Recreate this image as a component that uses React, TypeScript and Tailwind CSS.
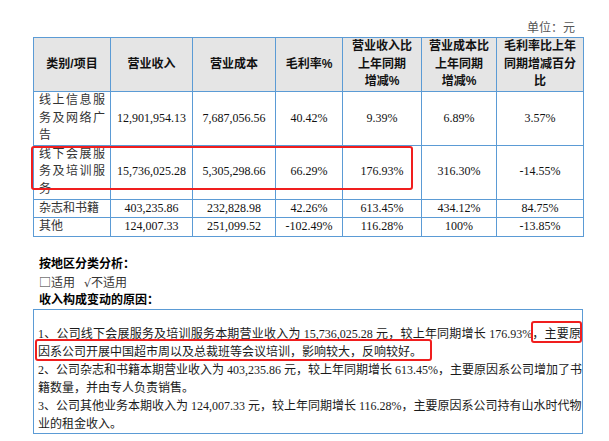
import React from "react";

const serif = "font-['Liberation_Serif','Noto_Sans_CJK_SC',serif]";
const sans = "font-['Liberation_Sans','Noto_Sans_CJK_SC',sans-serif]";

type Row = { name: string; vals: string[]; h: string };

const rows: Row[] = [
  { name: "线上信息服务及网络广告", vals: ["12,901,954.13", "7,687,056.56", "40.42%", "9.39%", "6.89%", "3.57%"], h: "h-[53px]" },
  { name: "线下会展服务及培训服务", vals: ["15,736,025.28", "5,305,298.66", "66.29%", "176.93%", "316.30%", "-14.55%"], h: "h-[54px]" },
  { name: "杂志和书籍", vals: ["403,235.86", "232,828.98", "42.26%", "613.45%", "434.12%", "84.75%"], h: "h-[18px]" },
  { name: "其他", vals: ["124,007.33", "251,099.52", "-102.49%", "116.28%", "100%", "-13.85%"], h: "h-[19px]" },
];

const th = "border border-[#5b9bd5] font-bold text-center align-middle p-0 text-[#111]";
const td = "border border-[#5b9bd5] text-center align-middle p-0 text-[#111]";

export default function App() {
  return (
    <div className={`relative w-[609px] h-[441px] bg-white overflow-hidden ${serif}`}>
      <div className="pl-[33px] pt-[20px] w-[583px]">
        <div className="w-[550px] text-right pr-[8px] text-[12px] leading-[17px] text-[#555]">单位：元</div>
        <table className="table-fixed border-collapse w-[550px] text-[12px] leading-[17.5px]">
          <colgroup>
            <col className="w-[77px]" />
            <col className="w-[82px]" />
            <col className="w-[83px]" />
            <col className="w-[67px]" />
            <col className="w-[79px]" />
            <col className="w-[75px]" />
            <col className="w-[87px]" />
          </colgroup>
          <thead className={sans}>
            <tr className="h-[54px] bg-[#e5e5e5]">
              <th className={th}>类别/项目</th>
              <th className={th}>营业收入</th>
              <th className={th}>营业成本</th>
              <th className={th}>毛利率%</th>
              <th className={th}>营业收入比<br />上年同期<br />增减%</th>
              <th className={th}>营业成本比<br />上年同期<br />增减%</th>
              <th className={th}>毛利率比上年<br />同期增减百分<br />比</th>
            </tr>
          </thead>
          <tbody>
            {rows.map((r) => (
              <tr key={r.name} className={r.h}>
                <td className="border border-[#5b9bd5] align-middle py-0 px-[5px] text-justify text-[#333]">{r.name}</td>
                {r.vals.map((v, i) => (
                  <td key={i} className={td}>{v}</td>
                ))}
              </tr>
            ))}
          </tbody>
        </table>
        <div className={`mt-[18px] pl-[6px] text-[12px] leading-[18px] ${sans}`}>
          <div className="h-[18px] font-bold text-black">按地区分类分析：</div>
          <div className="h-[18px] overflow-hidden text-[#333] font-['Noto_Sans_CJK_SC',sans-serif]">
            <span>□</span>适用<span className="ml-[9px] font-['DejaVu_Sans',sans-serif] text-[11px] leading-[12px]">√</span>不适用
          </div>
          <div className="h-[18px] font-bold text-black">收入构成变动的原因：</div>
        </div>
        <div className="w-[550px] h-[125px] border border-[#5b9bd5] pt-[15px] pl-[4px] pr-[1px] text-[12px] leading-[18px] text-[#1a1a1a]">
          <div className="whitespace-nowrap text-justify [text-align-last:justify]">1、公司线下会展服务及培训服务本期营业收入为 15,736,025.28 元，较上年同期增长 176.93%，主要原</div>
          <div className="whitespace-nowrap">因系公司开展中国超市周以及总裁班等会议培训，影响较大，反响较好。</div>
          <div className="whitespace-nowrap text-justify [text-align-last:justify]">2、公司杂志和书籍本期营业收入为 403,235.86 元，较上年同期增长 613.45%，主要原因系公司增加了书</div>
          <div className="whitespace-nowrap">籍数量，并由专人负责销售。</div>
          <div className="whitespace-nowrap text-justify [text-align-last:justify]">3、公司其他业务本期收入为 124,007.33 元，较上年同期增长 116.28%，主要原因系公司持有山水时代物</div>
          <div className="whitespace-nowrap">业的租金收入。</div>
        </div>
      </div>
      <div className="absolute left-[31px] top-[146px] w-[382px] h-[44px] border-2 border-[#f01e1e] rounded-[3px]" />
      <div className="absolute left-[531px] top-[321px] w-[51px] h-[22px] border-2 border-[#f01e1e] rounded-[3px]" />
      <div className="absolute left-[35px] top-[339px] w-[397px] h-[22px] border-2 border-[#f01e1e] rounded-[3px]" />
    </div>
  );
}
